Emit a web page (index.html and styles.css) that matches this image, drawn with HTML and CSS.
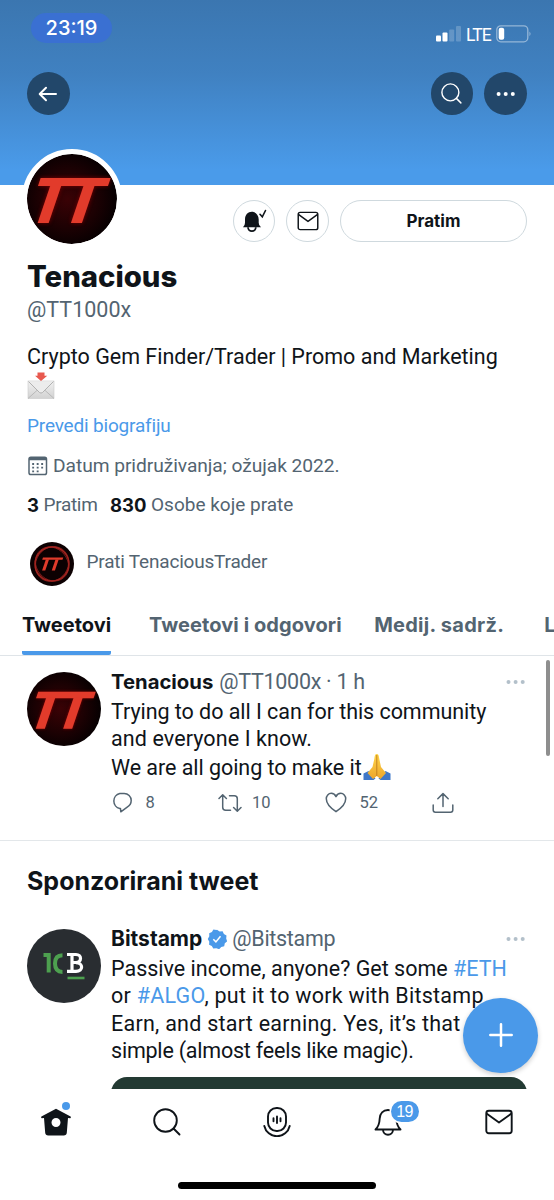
FILE: index.html
```html
<!DOCTYPE html>
<html lang="hr">
<head>
<meta charset="utf-8">
<title>Tenacious (@TT1000x)</title>
<link rel="stylesheet" href="styles.css">
</head>
<body>
<svg width="0" height="0" class="defs">
  <defs>
    <radialGradient id="glow" cx=".45" cy=".5" r=".55"><stop offset="0" stop-color="#3a0205"/><stop offset=".6" stop-color="#1c0103"/><stop offset="1" stop-color="#060001"/></radialGradient>
    <filter id="soft" x="-20%" y="-20%" width="140%" height="140%"><feGaussianBlur stdDeviation="2"/></filter>
    <linearGradient id="paper" x1="0" y1="0" x2="0" y2="1"><stop offset="0" stop-color="#f1f1f1"/><stop offset="1" stop-color="#d2d2d2"/></linearGradient>
    <linearGradient id="hand" x1="0" y1="0" x2="0" y2="1"><stop offset="0" stop-color="#ffd54a"/><stop offset="1" stop-color="#eda62c"/></linearGradient>
    <g id="mark" transform="translate(23.300 0) skewX(-18.700)"><rect x="-1.500" y="24" width="70" height="8"/><rect x="10.700" y="31" width="11" height="38"/><rect x="44" y="31" width="11" height="38"/></g>
    <symbol id="tt" viewBox="0 0 90 90">
      <circle cx="45" cy="45" r="45" fill="url(#glow)"/>
      <g fill="#a30e10" filter="url(#soft)" opacity=".7"><use href="#mark"/></g>
      <g fill="#e23b2b"><use href="#mark"/></g>
    </symbol>
    <symbol id="search" viewBox="0 0 28 28"><g fill="none" stroke="currentColor" stroke-width="1.900" stroke-linecap="round"><circle cx="12.500" cy="12.500" r="11.300"/><path d="m20.500 20.500 6 6"/></g></symbol>
    <symbol id="mail" viewBox="0 0 28 26"><g fill="none" stroke="currentColor" stroke-width="1.900" stroke-linejoin="round"><rect x="1.300" y="1.800" width="25.400" height="22.400" rx="2.500"/><path d="m1.500 4.500 12.500 9 12.500-9"/></g></symbol>
  </defs>
</svg>
<div class="phone">
  <main class="screen">
    <header class="banner">
      <div class="status">
        <span class="clock"><span class="t">23:19</span></span>
        <div class="signal">
          <svg width="25" height="16" viewBox="0 0 25 16" fill="#fff"><rect x="0" y="9.500" width="5" height="6" rx="1"/><rect x="6.500" y="6.500" width="5" height="9" rx="1"/><g opacity=".2"><rect x="13.200" y="3.500" width="5" height="12" rx="1"/><rect x="20" y="0" width="5" height="15.500" rx="1"/></g></svg>
          <span class="t lte">LTE</span>
          <svg width="36" height="18" viewBox="0 0 36 18"><rect x=".8" y=".8" width="31" height="16" rx="4" fill="none" stroke="#fff" stroke-opacity=".45" stroke-width="1.300"/><rect x="2.700" y="2.700" width="5.500" height="12" rx="2" fill="#fff"/><path d="M33.500 6.500q2 2.300 0 4.800z" fill="#fff" opacity=".5"/></svg>
        </div>
      </div>
      <div class="topbar">
        <button class="round"><svg width="20" height="16" viewBox="0 0 20 16" fill="none" stroke="#fff" stroke-width="2" stroke-linecap="round" stroke-linejoin="round"><path d="M18 8H2M8 1.800 1.700 8 8 14.200"/></svg></button>
        <button class="round push"><svg width="21" height="21"><use href="#search"/></svg></button>
        <button class="round"><svg width="20" height="6" fill="#fff"><circle cx="2.600" cy="3" r="2"/><circle cx="9.700" cy="3" r="2"/><circle cx="16.800" cy="3" r="2"/></svg></button>
      </div>
    </header>
    <section class="profile">
      <div class="actions">
        <svg class="avatar-lg" width="100" height="100"><use href="#tt" width="90" height="90"/></svg>
        <button class="ghost"><svg width="26" height="26" viewBox="0 0 26 26"><path d="M2 19.300q2-1.700 2-4.500v-3.200C4 6.800 7 3.800 10.800 3.800s6.900 3 6.900 7.800v3.200q0 2.800 2.300 4.500z" fill="#0f1419"/><path d="M7 19.300a3.900 3.900 0 0 0 7.800 0" fill="none" stroke="#0f1419" stroke-width="1.800"/><path d="m19 6.300 2.300 2.500 3.200-6.300" fill="none" stroke="#0f1419" stroke-width="1.600" stroke-linecap="round"/></svg></button>
        <button class="ghost"><svg width="22" height="20"><use href="#mail"/></svg></button>
        <button class="ghost wide"><b class="t">Pratim</b></button>
      </div>
      <h1><span class="t">Tenacious</span></h1>
      <p class="handle"><span class="t">@TT1000x</span></p>
      <p class="bio"><span class="t">Crypto Gem Finder/Trader | Promo and Marketing</span></p>
      <svg class="bio-emoji" width="28" height="30" viewBox="0 0 28 30"><rect x="1" y="10" width="26" height="17.500" fill="url(#paper)" stroke="#c9c9c9" stroke-width=".6"/><path d="m1 27.500 10-9M27 27.500l-10-9" stroke="#b9b9b9" fill="none"/><path d="m1.500 10.500 11 11q1.500 1.200 3 0l11-11" fill="#ececec" stroke="#aaa" stroke-width=".9"/><path d="M10.500 1.500h7v3.200h2.800L14 10 8 4.700h2.500z" fill="#e8594f"/></svg>
      <p class="translate"><span class="t">Prevedi biografiju</span></p>
      <p class="joined"><svg width="20" height="20" viewBox="0 0 20 20"><rect x="1" y="1.200" width="17.500" height="17.300" rx="1.800" fill="none" stroke="#536471" stroke-width="1.500"/><path d="M1 3h17.500" stroke="#536471" stroke-width="2.500"/><path d="M4.200 8h12M4.200 11.700h12M4.200 15.300h8" stroke="#536471" stroke-width="1.800" stroke-dasharray="1.900 2.600"/></svg><span class="t">Datum pridruživanja; ožujak 2022.</span></p>
      <p class="stats"><b class="t num">3</b><span class="t following">Pratim</span><b class="t num">830</b><span class="t">Osobe koje prate</span></p>
      <div class="mutual">
        <svg width="44" height="44" viewBox="0 0 44 44"><circle cx="22" cy="22" r="22" fill="#0c0102"/><g fill="none" stroke="#a32420"><circle cx="22" cy="22" r="17" stroke-width="1.500"/><ellipse cx="22" cy="22" rx="16" ry="18" stroke-width=".7" transform="rotate(35 22 22)"/><ellipse cx="22" cy="22" rx="15.500" ry="18" stroke-width=".7" transform="rotate(-40 22 22)"/></g><g fill="#e23b2b" transform="translate(9 8.500) scale(.29)"><use href="#mark"/></g></svg>
        <span class="t">Prati TenaciousTrader</span>
      </div>
    </section>
    <nav class="tabs">
      <a class="tab on"><span class="t">Tweetovi</span></a>
      <a class="tab replies"><span class="t">Tweetovi i odgovori</span></a>
      <a class="tab media"><span class="t">Medij. sadrž.</span></a>
      <a class="tab"><span class="t">Lajkovi</span></a>
    </nav>
    <article class="tweet first">
      <svg class="avatar" width="74" height="74"><use href="#tt"/></svg>
      <div class="body">
        <div class="head"><b class="t">Tenacious</b><span class="t user">@TT1000x · 1 h</span><svg class="dots" width="20" height="6"><circle cx="2.500" cy="3" r="2"/><circle cx="9.600" cy="3" r="2"/><circle cx="16.700" cy="3" r="2"/></svg></div>
        <p class="text"><span class="t snug">Trying to do all I can for this community</span><br><span class="t loose">and everyone I know.</span><br><span class="t snug">We are all going to make it</span><svg class="pray" width="28" height="28" viewBox="0 0 28 28"><path d="m.5 20.500 5-2.500 7 7.500-2 1.500H.5zM27.500 20.500l-5-2.500-7 7.500 2 1.500h10z" fill="#3f78c9"/><path d="M13.800 1c-1.800 0-2 1.500-2.500 5L9.500 14 4.500 20l5.500 6 3.800-3 3.700 3 5.500-6-5-6-1.700-8c-.5-3.500-.7-5-2.500-5z" fill="url(#hand)"/><path d="M13.800 2v21" stroke="#bd7b1d" stroke-width=".9"/></svg></p>
        <div class="tools">
          <span><svg width="22" height="22" viewBox="0 0 22 22"><path d="M9.500 16.500H8.800A7.700 7.700 0 0 1 8.800 1.500h4.400a7 7 0 0 1 7 7c0 2.700-1.300 5-4 6.700L9.800 19.800z"/></svg><i class="t">8</i></span>
          <span><svg width="24" height="20" viewBox="0 0 24 20"><path d="M1 5.500 4.700 1.800l3.700 3.700M4.700 2v12.300q0 3 3 3h4.800M11.500 2.700h4.800q3 0 3 3V18M15.600 14.500l3.700 3.700 3.700-3.700"/></svg><i class="t two">10</i></span>
          <span><svg width="22" height="21" viewBox="0 0 22 21"><path d="M11 19.700C6.500 16.700 1.300 12.200 1.300 6.800c0-3 2.200-5.500 4.900-5.500 2.200 0 3.900 1.200 4.800 3.300.9-2.100 2.600-3.300 4.800-3.300 2.700 0 4.900 2.500 4.900 5.500 0 5.400-5.200 9.900-9.700 12.900z"/></svg><i class="t">52</i></span>
          <span><svg width="22" height="22" viewBox="0 0 22 22"><path d="M1.200 13v5q0 2.200 2.200 2.200h15.200q2.200 0 2.200-2.200v-5M11 14.500V1.800M5.800 6.800 11 1.600l5.200 5.200"/></svg></span>
        </div>
      </div>
    </article>
    <h2><span class="t">Sponzorirani tweet</span></h2>
    <article class="tweet second">
      <svg class="avatar" width="74" height="74" viewBox="0 0 74 74"><circle cx="37" cy="37" r="37" fill="#292d31"/><g fill="none" stroke="#4da04f" stroke-width="4"><path d="M16.500 26h5.200v17.500"/><path d="M35.500 26.300c-5.500 0-7.500 3.500-7.500 8.300s2 8.300 7.500 8.300"/></g><g fill="none" stroke="#fff" stroke-width="3.200"><path d="M40 25.500h9c6 0 6 7.700 0 8H43.500M49 33.700c7.500.2 7.500 8.500 0 8.700H40M45 26v16"/></g><path d="M40.500 49h17" stroke="#4da04f" stroke-width="2.600"/></svg>
      <div class="body">
        <div class="head"><b class="t brand">Bitstamp</b><svg class="verified" width="20" height="20" viewBox="0 0 20 20"><path d="M10 .8l2.600 1.600 3-.2 1.300 2.700 2.600 1.500-.3 3 .9 2.900-2.300 2-.6 3-3 .6-2 2.300-2.900-.9-3 .3-1.500-2.600-2.700-1.300.2-3L.8 10l1.500-2.700-.1-3 2.700-1.300L6.400.6l3 .3z" fill="#4a99e9"/><path d="m6.300 10.300 2.600 2.600 4.600-5.600" fill="none" stroke="#fff" stroke-width="1.500"/></svg><span class="t user">@Bitstamp</span><svg class="dots" width="20" height="6"><circle cx="2.500" cy="3" r="2"/><circle cx="9.600" cy="3" r="2"/><circle cx="16.700" cy="3" r="2"/></svg></div>
        <p class="text"><span class="t">Passive income, anyone? Get some <a>#ETH</a></span><br><span class="t wide-set">or <a>#ALGO</a>, put it to work with Bitstamp</span><br><span class="t wide-set">Earn, and start earning. Yes, it’s that</span><br><span class="t tight">simple (almost feels like magic).</span></p>
        <div class="card"></div>
      </div>
    </article>
    <div class="scrollbar"></div>
    <button class="fab"><svg width="24" height="24" stroke="#fff" stroke-width="2.500" stroke-linecap="round"><path d="M12 1.300v21.400M1.300 12h21.400"/></svg></button>
  </main>
  <footer class="dock">
    <div class="items">
      <span><svg width="30" height="28" viewBox="0 0 30 28"><path fill-rule="evenodd" d="M15 .8 29.600 8.500q.8 1-.4 1.800l-2.200-.2-1.200 14.700q-.3 2.700-3 2.700H7.200q-2.700 0-3-2.700L3 10.100l-2.200.2Q-.4 9.500.4 8.500zM15 10a4.500 4.500 0 1 0 0 9 4.500 4.500 0 0 0 0-9z" fill="#0f1419"/></svg><em class="dot"></em></span>
      <span><svg width="28" height="28"><use href="#search"/></svg></span>
      <span><svg width="28" height="30" viewBox="0 0 28 30" fill="none" stroke="#0f1419" stroke-width="1.900" stroke-linecap="round"><rect x="5" y="1" width="18" height="23" rx="8.500"/><path d="M10.500 11.300v2.900M14 9.500v6.500M17.500 11.300v2.900M1.300 19a13 13 0 0 0 25.400 0"/></svg></span>
      <span><svg width="28" height="28" viewBox="0 0 28 28" fill="none" stroke="#0f1419" stroke-width="1.900" stroke-linecap="round" stroke-linejoin="round"><path d="M14 2C9 2 6 5.500 5.700 10.500c-.2 5-1 8-4.200 11h25c-3.200-3-4-6-4.200-11C22 5.500 19 2 14 2zM9 21.700a5 5 0 0 0 10 0"/></svg><em class="badge"><span class="t">19</span></em></span>
      <span><svg width="28" height="26"><use href="#mail"/></svg></span>
    </div>
    <div class="homebar"></div>
  </footer>
</div>
</body>
</html>
```

FILE: styles.css
```css
* { box-sizing: border-box; }
body { margin: 0; background: #fff; color: #0f1419; font-family: Roboto, "Liberation Sans", sans-serif; }
h1, h2, p { margin: 0; font-weight: 400; }
b, h1, h2, .tab { font-family: Inter, "Liberation Sans", sans-serif; font-weight: 700; }
i, em { font-style: normal; }
a { color: #4a99e9; }
button { border: 0; padding: 0; background: none; font: inherit; color: inherit; display: flex; align-items: center; justify-content: center; }
svg { display: block; flex: none; }
.t { white-space: nowrap; }
.defs { position: absolute; }
.phone { width: 554px; height: 1200px; display: flex; flex-direction: column; overflow: hidden; }
.screen { position: relative; height: 1089px; overflow: hidden; flex: none; }

.banner { height: 184.500px; background: linear-gradient(#3b76b0, #4081c1 40%, #4a9bea 92%); color: #fff; padding: 13px 27px 0; }
.status { display: flex; justify-content: space-between; align-items: flex-start; height: 59px; }
.clock { margin-left: 4px; width: 81px; height: 30px; border-radius: 15px; background: #3a70d2; font: 500 20px/30px Inter, sans-serif; text-align: center; }
.signal { display: flex; align-items: center; height: 18px; margin: 12px -5px 0 0; }
.lte { font-size: 17.500px; line-height: 18px; margin: 1px 5px 0 4.500px; letter-spacing: -.8px; }
.topbar { display: flex; gap: 11px; }
.round { width: 42.700px; height: 43px; border-radius: 50%; background: #22476a; color: #fff; }
.push { margin-left: auto; }

.profile { padding: 0 27px; }
.actions { position: relative; display: flex; justify-content: flex-end; gap: 11.200px; padding-top: 15px; }
.avatar-lg { position: absolute; left: -5px; top: -36px; border: 5px solid #fff; border-radius: 50%; background: #fff; }
.ghost { width: 42.500px; height: 42.500px; border: 1.500px solid #cfd9de; border-radius: 22px; }
.wide { width: 187px; font-size: 17px; }
h1 { margin-top: 16.500px; font-size: 29.300px; line-height: 36px; font-weight: 800; }
.handle { margin-top: 1px; font-size: 21.500px; line-height: 28px; color: #536471; }
.bio { margin-top: 19px; font-size: 21.500px; line-height: 28px; }
.translate { margin-top: 12.500px; font-size: 19px; line-height: 26px; letter-spacing: -.18px; color: #4a99e9; }
.joined { margin-top: 13.500px; display: flex; gap: 5px; align-items: center; padding-left: 1px; font-size: 19.200px; line-height: 26px; letter-spacing: -.05px; color: #536471; }
.stats { margin-top: 13.500px; display: flex; font-size: 19px; line-height: 26px; color: #536471; }
.stats b { color: #0f1419; font-size: 18.500px; }
.num { margin-right: 4.500px; }
.following { margin-right: 12.500px; letter-spacing: -.3px; }
.mutual { margin-top: 24px; padding-left: 2.500px; display: flex; gap: 13px; align-items: center; font-size: 19px; line-height: 26px; letter-spacing: -.2px; color: #536471; }
.mutual .t { margin-bottom: 4px; }

.tabs { height: 70px; display: flex; gap: 38px; padding-left: 22px; border-bottom: 1px solid #dfe4e8; }
.tab { flex: none; padding-top: 26px; font-size: 20px; line-height: 26px; color: #536471; }
.on { color: #0f1419; border-bottom: 4.500px solid #4a99e9; border-radius: 0 0 2px 2px; }
.replies { letter-spacing: .08px; margin-right: -5.500px; }
.media { letter-spacing: .27px; margin-right: 2px; }

.tweet { display: flex; gap: 10px; padding: 0 27px; }
.first { height: 185px; border-bottom: 1.500px solid #e3e7ea; }
.avatar { margin-top: 16px; }
.body { flex: 1; min-width: 0; padding-top: 12px; font-size: 21.500px; }
.head { display: flex; align-items: center; line-height: 28px; color: #536471; }
.head b { font-size: 20.300px; color: #0f1419; margin-right: 6px; }
.head .brand { font-size: 21px; margin-right: 7px; }
.user { letter-spacing: -.3px; }
.dots { margin-left: auto; margin-right: 1px; fill: #b3c0ca; }
.text { margin-top: 1.700px; line-height: 27.600px; }
.snug { letter-spacing: -.05px; }
.loose { letter-spacing: .1px; }
.wide-set { letter-spacing: .25px; }
.tight { letter-spacing: -.22px; }
.pray { display: inline-block; vertical-align: -6px; margin-left: 1px; }
.tools { display: flex; margin-top: 10.300px; height: 22px; font-size: 16.500px; line-height: 22px; color: #536471; }
.tools span { flex: none; display: flex; align-items: center; width: 107px; }
.tools i { margin-left: 12.500px; }
.tools .two { margin-left: 10px; }
.tools svg { fill: none; stroke: #536471; stroke-width: 1.500; stroke-linecap: round; stroke-linejoin: round; }
h2 { padding: 25px 27px 0; font-size: 25px; line-height: 30px; }
.second { padding-top: 17px; }
.verified { margin: 0 5px 0 -2px; }
.card { height: 30px; margin-top: 12px; border-radius: 16px 16px 0 0; background: #233a33; }
.scrollbar { position: absolute; left: 546px; top: 660px; width: 4px; height: 96px; border-radius: 2px; background: #8e8e8e; }
.fab { position: absolute; left: 463px; top: 997.500px; width: 75px; height: 75px; border-radius: 50%; background: #4a99e9; box-shadow: 0 2px 5px #0003; }

.dock { height: 111px; padding: 12.500px 0 0 .5px; display: flex; flex-direction: column; }
.items { display: flex; height: 40px; }
.items > span { position: relative; width: 110.800px; display: flex; align-items: center; justify-content: center; }
.dot { position: absolute; left: 61.500px; top: 0; width: 8px; height: 8px; border-radius: 50%; background: #4a99e9; }
.badge { position: absolute; left: 58px; top: -1px; width: 28px; height: 21.500px; border-radius: 11px; background: #4a99e9; box-shadow: 0 0 0 1.500px #fff; color: #fff; font: 16px/21.500px "Liberation Sans", sans-serif; letter-spacing: -.6px; text-align: center; }
.homebar { margin: 40.500px auto 0; width: 198px; height: 7px; border-radius: 4px; background: #000; }
```
